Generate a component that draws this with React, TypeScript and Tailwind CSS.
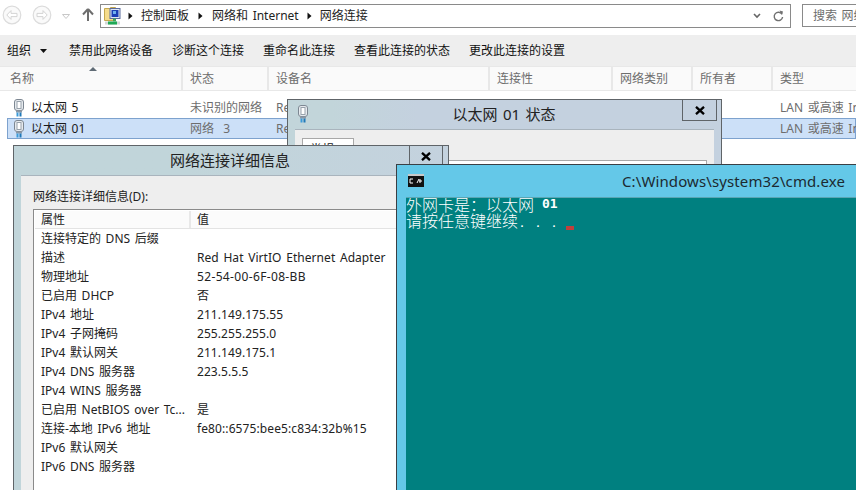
import React from "react";

const NicIcon = () => (
  <svg width="12" height="18" viewBox="0 0 12 18" className="block shrink-0">
    <rect x="1.5" y="0.5" width="9" height="11" rx="2.5" fill="#e6eaee" stroke="#7d8792" />
    <rect x="4" y="2.5" width="4" height="7" fill="#fff" stroke="#98a2ac" />
    <rect x="3" y="11.5" width="6" height="2" fill="#8b98a6" />
    <rect x="3.5" y="13.5" width="2" height="4" fill="#3a9ad9" />
    <rect x="6.5" y="13.5" width="2" height="4" fill="#1f78b8" />
  </svg>
);

const PanelIcon = () => (
  <svg width="17" height="20" viewBox="0 0 17 20" className="block shrink-0">
    <path d="M0.5 2.5h5l1-1h5v13h-11z" fill="#f5dc8c" stroke="#c4a84f" />
    <rect x="6" y="2.5" width="10" height="10" fill="#dfe6f4" stroke="#5b6c9c" />
    <rect x="7.5" y="4" width="7" height="7" fill="#1a3fb5" />
    <rect x="9" y="5" width="3" height="3" fill="#6fb0ee" />
    <rect x="9" y="12.5" width="3" height="3" fill="#3fa45a" />
    <rect x="1" y="15.5" width="15" height="3" fill="#d4d8d8" />
    <rect x="4" y="15.5" width="9" height="3" fill="#1faa55" />
  </svg>
);

const NavCircle = ({ flip }: { flip?: boolean }) => (
  <svg width="20" height="20" viewBox="0 0 20 20" className="block shrink-0" style={{ transform: flip ? "scaleX(-1)" : undefined }}>
    <circle cx="10" cy="10" r="8.8" fill="#fafafa" stroke="#dcdcdc" strokeWidth="1.2" />
    <path d="M15 8.4H9V5.6L4.8 10 9 14.4v-2.8h6z" fill="#fff" stroke="#d4d4d4" />
  </svg>
);

const Crumb = () => (
  <svg width="5" height="8" viewBox="0 0 5 8" className="block shrink-0">
    <path d="M0.5 0.5L4.5 4L0.5 7.5z" fill="#111" />
  </svg>
);

const columns = [
  { label: "名称", width: "w-[183px]" },
  { label: "状态", width: "w-[86px]" },
  { label: "设备名", width: "w-[221px]" },
  { label: "连接性", width: "w-[123px]" },
  { label: "网络类别", width: "w-[80px]" },
  { label: "所有者", width: "w-[80px]" },
  { label: "类型", width: "w-[90px]" },
];

const tools = ["禁用此网络设备", "诊断这个连接", "重命名此连接", "查看此连接的状态", "更改此连接的设置"];

const details: [string, string, string][] = [
  ["连接特定的 DNS 后缀", "", ""],
  ["描述", "Red Hat VirtIO Ethernet Adapter", "tracking-[0.05px]"],
  ["物理地址", "52-54-00-6F-08-BB", "tracking-[0.35px]"],
  ["已启用 DHCP", "否", ""],
  ["IPv4 地址", "211.149.175.55", "tracking-[0.07px]"],
  ["IPv4 子网掩码", "255.255.255.0", "tracking-[0.07px]"],
  ["IPv4 默认网关", "211.149.175.1", "tracking-[0.07px]"],
  ["IPv4 DNS 服务器", "223.5.5.5", "tracking-[0.07px]"],
  ["IPv4 WINS 服务器", "", ""],
  ["已启用 NetBIOS over Tc...", "是", ""],
  ["连接-本地 IPv6 地址", "fe80::6575:bee5:c834:32b%15", "tracking-[0.1px]"],
  ["IPv6 默认网关", "", ""],
  ["IPv6 DNS 服务器", "", ""],
];

const Row = ({ name, status, selected }: { name: string; status: string; selected?: boolean }) => (
  <div className={`flex items-center h-[21px] ml-[7px] text-[12px] border ${selected ? "bg-[#cce0f8] border-[#7da2ce]" : "border-transparent"}`}>
    <div className="w-[182px] flex items-center shrink-0 pl-[5px] gap-[6px] text-[#1a1a1a]">
      <NicIcon />
      <span>{name}</span>
    </div>
    <div className="w-[86px] shrink-0 text-[#6d6d6d] whitespace-pre">{status}</div>
    <div className="w-[504px] shrink-0 text-[#6d6d6d]">Re</div>
    <div className="whitespace-nowrap text-[#6d6d6d]">LAN 或高速 In</div>
  </div>
);

const CloseX = ({ className }: { className: string }) => (
  <div className={`absolute top-[-1px] h-[22px] border border-[#5f6468] flex items-center justify-center ${className}`}>
    <svg width="10" height="9" viewBox="0 0 10 9" className="block">
      <path d="M1 0.8L9 8.2M9 0.8L1 8.2" stroke="#000" strokeWidth="2.3" />
    </svg>
  </div>
);

export default function App() {
  return (
    <div className="relative w-[856px] h-[490px] overflow-hidden bg-white text-[12px] text-[#1a1a1a] [word-spacing:1.5px] [font-family:'Noto_Sans','Noto_Sans_CJK_SC',sans-serif]">
      {/* Navigation */}
      <div className="h-[35px] flex items-start">
        <div className="flex items-center h-[30px] pl-[2px] shrink-0">
          <NavCircle />
          <div className="w-[10px]" />
          <NavCircle flip />
          <svg width="8" height="5" viewBox="0 0 8 5" className="ml-[10px] mt-[2px] block">
            <path d="M0.5 0.5h7L4 4.5z" fill="#fff" stroke="#c8c8c8" />
          </svg>
          <svg width="12" height="14" viewBox="0 0 12 14" className="ml-[12px] block">
            <path d="M6 1L1 6.5M6 1l5 5.5M6 1v12" stroke="#6e6e6e" strokeWidth="2" fill="none" />
          </svg>
        </div>
        <div className="ml-[6px] mt-[4px] w-[691px] shrink-0 h-[24px] border border-[#8a8a8a] flex items-center pl-[3px] text-[#222]">
          <PanelIcon />
          <div className="ml-[7px]"><Crumb /></div>
          <span className="ml-[8px]">控制面板</span>
          <div className="ml-[9px]"><Crumb /></div>
          <span className="ml-[9px]">网络和 Internet</span>
          <div className="ml-[8px]"><Crumb /></div>
          <span className="ml-[8px]">网络连接</span>
          <svg width="8" height="6" viewBox="0 0 8 6" className="ml-auto block">
            <path d="M1 1l3 3 3-3" stroke="#666" strokeWidth="1.6" fill="none" />
          </svg>
          <svg width="11" height="12" viewBox="0 0 11 12" className="ml-[12px] mr-[6px] block">
            <path d="M9 4.2A4.2 4.2 0 1 0 9.6 7" stroke="#707070" strokeWidth="1.4" fill="none" />
            <path d="M6.5 0.5l3.5 1-1 3.5z" fill="#707070" />
          </svg>
        </div>
        <div className="ml-[11px] mt-[4px] w-[70px] shrink-0 h-[23px] border border-[#8a8a8a] flex items-center pl-[10px] whitespace-nowrap overflow-hidden text-[#6d6d6d]">
          搜索 网络
        </div>
      </div>

      {/* Toolbar */}
      <div className="h-[31px] bg-[#eeeeee] flex items-center pl-[7px] text-[#111] whitespace-nowrap">
        <span>组织</span>
        <svg width="7" height="4" viewBox="0 0 7 4" className="ml-[9px] block">
          <path d="M0 0h7L3.5 4z" fill="#111" />
        </svg>
        <div className="ml-[22px] flex gap-[19px]">
          {tools.map((t) => (
            <span key={t}>{t}</span>
          ))}
        </div>
      </div>

      {/* Column header */}
      <div className="relative h-[25px] bg-[#fafafa] border-y border-[#e8e8e8] flex text-[#6d6d6d]">
        {columns.map((c) => (
          <div key={c.label} className={`${c.width} shrink-0 pl-[7px] pr-0 first:pl-[10px] border-r-2 border-[#e8e8e8] flex items-center`}>
            {c.label}
          </div>
        ))}
        <svg width="8" height="4" viewBox="0 0 8 4" className="absolute left-[89px] top-0 block">
          <path d="M0 4L4 0l4 4z" fill="#5f6b75" />
        </svg>
      </div>

      {/* Rows */}
      <div className="pt-[6px]">
        <Row name="以太网 5" status="未识别的网络" />
        <Row name="以太网 01" status="网络  3" selected />
      </div>

      {/* Status window */}
      <div className="absolute left-[287px] top-[99px] w-[435px] h-[420px] border border-[#5f6468] bg-linear-to-r from-[#c2d5da] from-[10%] to-[#c4d1df] to-[30%]">
        <div className="h-[29px] relative flex items-center justify-center text-[15px] text-[#222]">
          <div className="absolute left-[9px] top-[5px]"><NicIcon /></div>
          <span className="mr-[1px]">以太网 01 状态</span>
          <CloseX className="left-[394px] w-[35px]" />
        </div>
        <div className="mx-[7px] h-[360px] bg-[#eeeeee] border-t border-[#a9b4bd] pt-[8px] px-[7px]">
          <div className="w-[52px] h-[23px] bg-white border border-[#a8a8a8] border-b-0 pl-[7px] pt-[2px]">常规</div>
          <div className="h-[300px] bg-white border border-[#a8a8a8] -mt-px" />
        </div>
      </div>

      {/* Details window */}
      <div className="absolute left-[13px] top-[145px] w-[436px] h-[380px] border border-[#5f6468] bg-linear-to-r from-[#c1d5da] from-[40%] to-[#c4d2de]">
        <div className="h-[29px] relative flex items-center justify-center text-[15px] text-[#222]">
          <span className="mr-[2px]">网络连接详细信息</span>
          <CloseX className="left-[395px] w-[34px]" />
        </div>
        <div className="mx-[7px] h-[340px] bg-[#eeeeee] border-t border-[#a9b4bd] pt-[12px] px-[12px]">
          <div className="leading-[18px] h-[21px] text-[#222]">网络连接详细信息(D):</div>
          <div className="h-[320px] bg-white border border-[#8a8a8a] pt-[1px] text-[#222]">
            <div className="h-[18px] mx-[1px] flex items-center bg-[#fbfbfb] border-b border-[#e3e3e3]">
              <div className="w-[156px] h-full pl-[6px] flex items-center border-r-2 border-[#e8e8e8]">属性</div>
              <div className="pl-[6px]">值</div>
            </div>
            <div>
              {details.map(([k, v, track]) => (
                <div key={k} className="h-[19px] flex items-center whitespace-nowrap">
                  <div className="w-[163px] pl-[7px] shrink-0">{k}</div>
                  <div className={track}>{v}</div>
                </div>
              ))}
            </div>
          </div>
        </div>
      </div>

      {/* Console window */}
      <div className="absolute left-[396px] top-[164px] w-[480px] h-[340px] border border-[#3a3f44] bg-[#64c8e8]">
        <div className="h-[32px] relative flex items-center text-[15px] text-[#1c2a30]">
          <svg width="16" height="13" viewBox="0 0 16 13" className="absolute left-[11px] top-[9px] block">
            <rect width="16" height="13" fill="#111" />
            <rect y="0" width="16" height="2" fill="#c8c8c8" />
            <path d="M2 5h3M2 5v4h3M7 6v0M7 8.5v0M9 9l2-4M12 5v4M11 7h3" stroke="#fff" strokeWidth="1" fill="none" />
          </svg>
          <span className="absolute left-[225px] whitespace-nowrap tracking-[0.11px]">C:\Windows\system32\cmd.exe</span>
        </div>
        <div className="ml-[9px] h-[300px] bg-[#008080] border-t border-[#5aa6b4] text-white text-[16px] leading-[16px] [font-family:'Noto_Sans_CJK_SC',monospace] font-light whitespace-pre overflow-hidden">
          <div className="-mt-[2px] flex items-start h-[16px]">
            <span>外网卡是：以太网</span>
            <span className="w-[8px]" />
            <span className="font-bold [font-family:'DejaVu_Sans_Mono',monospace] text-[13px]">01</span>
          </div>
          <div className="flex items-start">
            <span>请按任意键继续</span>
            <span className="w-[8px] text-center">.</span>
            <span className="w-[8px]" />
            <span className="w-[8px] text-center">.</span>
            <span className="w-[8px]" />
            <span className="w-[8px] text-center">.</span>
            <span className="w-[8px]" />
            <span className="w-[8px] h-[4px] mt-[14px] bg-[#c0403c]" />
          </div>
        </div>
      </div>
    </div>
  );
}
